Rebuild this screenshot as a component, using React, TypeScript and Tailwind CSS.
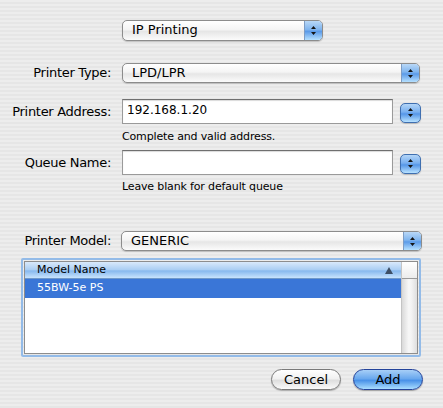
import React from "react";

const font = "font-['Lucida_Grande','DejaVu_Sans',sans-serif]";

function Arrows() {
  return (
    <svg width="7" height="11" viewBox="0 0 7 11">
      <path d="M3.5 1 L6 4 L1 4 Z M3.5 10 L6 7 L1 7 Z" fill="#151515" />
    </svg>
  );
}

function Popup({ value, className = "" }: { value: string; className?: string }) {
  return (
    <div
      className={`flex h-[20px] overflow-hidden rounded-[5px] border border-[#8c8c8c] bg-[linear-gradient(#ffffff,#f4f4f4_45%,#e6e6e6_55%,#fbfbfb)] shadow-[0_1px_1px_rgba(0,0,0,0.18)] ${className}`}
    >
      <span className="flex-1 pl-[9px] text-[13px] leading-[18px] text-black">{value}</span>
      <span className="flex w-[18px] items-center justify-center border-l border-[#7d9cc4] bg-[linear-gradient(#b9d8f7,#7fb4ee_45%,#5b9ae8_55%,#b5e0ff)]">
        <Arrows />
      </span>
    </div>
  );
}

function Stepper() {
  return (
    <div className="flex h-[20px] w-[21px] items-center justify-center rounded-[5px] border border-[#3f6fb0] bg-[linear-gradient(#b3d5f7,#78aff0_45%,#5596e8_55%,#b8e2ff)] shadow-[0_1px_1px_rgba(0,0,0,0.2)]">
      <Arrows />
    </div>
  );
}

function Field({ value = "" }: { value?: string }) {
  return (
    <div className="h-[25px] w-[271px] border border-[#9a9a9a] border-t-[#6f6f6f] bg-white px-[4px] text-[12px] leading-[20px] text-black shadow-[inset_0_1px_1px_rgba(0,0,0,0.15)]">
      {value}
    </div>
  );
}

export default function App() {
  return (
    <div
      className={`${font} h-[408px] w-[443px] overflow-hidden bg-[image:repeating-linear-gradient(180deg,#ededed_0px,#ededed_2px,#e6e6e6_2px,#e6e6e6_4px)] text-[13px] text-black`}
    >
      {/* top popup */}
      <div className="flex pt-[20px]">
        <div className="w-[122px]" />
        <Popup value="IP Printing" className="h-[21px] w-[201px]" />
      </div>

      {/* printer type */}
      <div className="mt-[22px] flex items-center">
        <div className="w-[113px] pr-[2px] text-right tracking-[-0.3px]">Printer Type:</div>
        <Popup value="LPD/LPR" className="ml-[9px] w-[298px]" />
      </div>

      {/* address */}
      <div className="mt-[16px] flex items-center">
        <div className="w-[113px] pr-[2px] text-right tracking-[-0.3px]">Printer Address:</div>
        <div className="ml-[9px]">
          <Field value="192.168.1.20" />
        </div>
        <div className="ml-[7px] mt-[2px]">
          <Stepper />
        </div>
      </div>
      <div className="mt-[6px] h-[14px] pl-[122px] text-[11px] leading-[14px] tracking-[-0.15px]">
        Complete and valid address.
      </div>

      {/* queue */}
      <div className="mt-[6px] flex items-center">
        <div className="w-[113px] pr-[2px] text-right tracking-[-0.3px]">Queue Name:</div>
        <div className="ml-[9px]">
          <Field />
        </div>
        <div className="ml-[7px] mt-[2px]">
          <Stepper />
        </div>
      </div>
      <div className="mt-[5px] h-[14px] pl-[122px] text-[11px] leading-[14px] tracking-[-0.15px]">
        Leave blank for default queue
      </div>

      {/* printer model */}
      <div className="mt-[37px] flex items-center">
        <div className="w-[113px] pr-[2px] text-right tracking-[-0.3px]">Printer Model:</div>
        <Popup value="GENERIC" className="ml-[8px] w-[301px]" />
      </div>

      {/* model table */}
      <div className="ml-[21px] mt-[7px] h-[99px] w-[400px] rounded-[2px] border-[2px] border-[#93bbe8] p-px">
        <div className="flex h-full border border-[#8d8d8d] bg-white">
          <div className="flex flex-1 flex-col">
            <div className="flex h-[17px] items-center justify-between border-b border-[#6f98c9] bg-[linear-gradient(#d9e9fb,#a9cdf3_50%,#86b8ee_55%,#c8e3fd)] pl-[12px] pr-[8px] text-[11px]">
              <span>Model Name</span>
              <svg width="8" height="7" viewBox="0 0 8 7">
                <path d="M4 0 L8 7 L0 7 Z" fill="#3d4f66" />
              </svg>
            </div>
            <div className="flex h-[19px] items-center bg-[#3a76d7] pl-[12px] text-[11px] text-white">
              55BW-5e PS
            </div>
          </div>
          <div className="flex w-[16px] flex-col border-l border-[#c4c4c4]">
            <div className="h-[17px] border-b border-[#9a9a9a] bg-[linear-gradient(#ffffff,#ececec)]" />
            <div className="flex-1 bg-[linear-gradient(90deg,#d9d9d9,#f7f7f7_45%,#f4f4f4_60%,#dedede)]" />
          </div>
        </div>
      </div>

      {/* buttons */}
      <div className="mt-[12px] flex justify-end pr-[20px]">
        <button className="h-[21px] w-[70px] rounded-full border border-[#7a7a7a] bg-[linear-gradient(#ffffff,#f1f1f1_45%,#dedede_55%,#fafafa)] text-[13px] leading-[18px] shadow-[0_1px_1px_rgba(0,0,0,0.25)]">
          Cancel
        </button>
        <button className="ml-[12px] h-[21px] w-[70px] rounded-full border border-[#24439a] bg-[linear-gradient(#a7cff7,#6aa8ee_45%,#4a92e8_55%,#a9ddff)] text-[13px] leading-[18px] shadow-[0_1px_1px_rgba(0,0,0,0.3)]">
          Add
        </button>
      </div>
    </div>
  );
}
